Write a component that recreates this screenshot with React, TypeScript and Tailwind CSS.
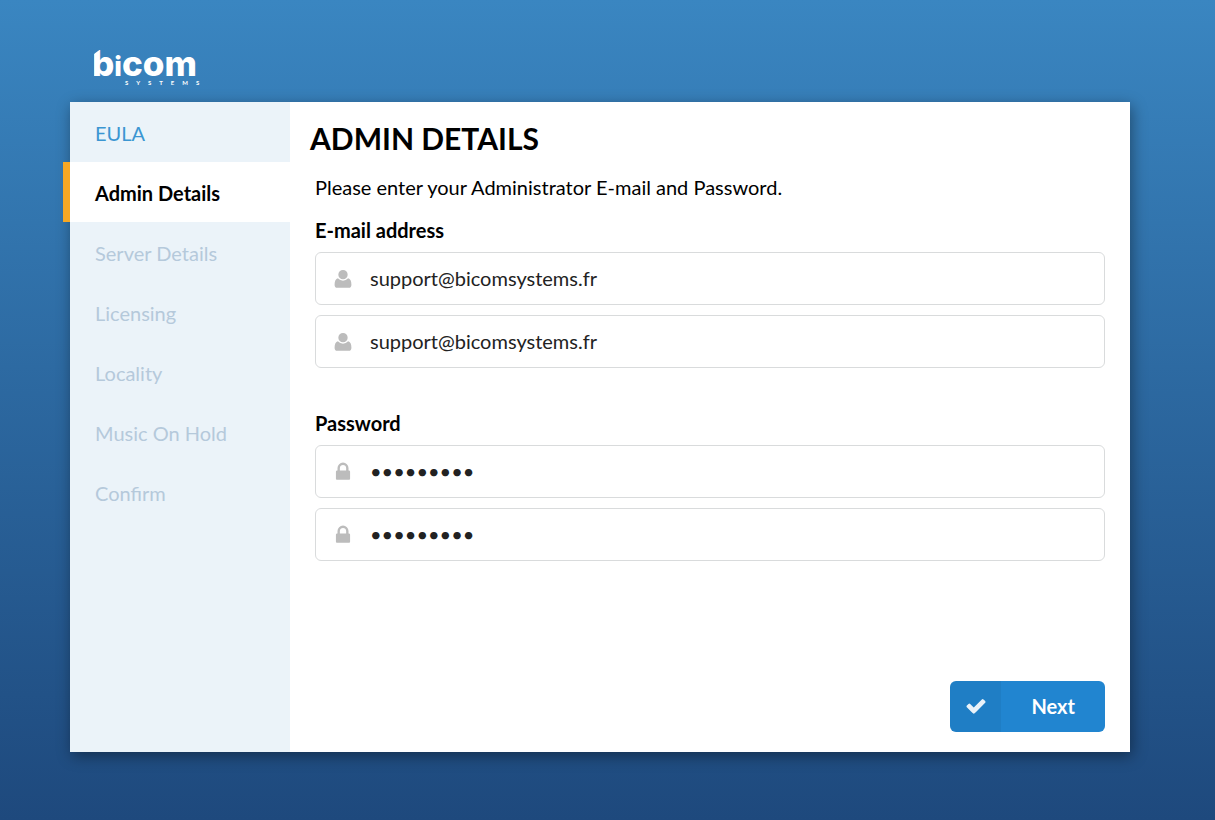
import { useState } from "react";

const steps = [
  "EULA",
  "Admin Details",
  "Server Details",
  "Licensing",
  "Locality",
  "Music On Hold",
  "Confirm",
];

const icons = {
  user: "M896 160a380 380 0 0 1 0 760a380 380 0 0 1 0-760zM480 830q170 200 416 200t416-200q270 60 270 530 0 250-210 250h-952q-210 0-210-250 0-470 270-530z",
  lock: "M640 768h512v-192q0-106-75-181t-181-75-181 75-75 181v192zm832 96v576q0 40-28 68t-68 28h-960q-40 0-68-28t-28-68v-576q0-40 28-68t68-28h32v-192q0-184 132-316t316-132 316 132 132 316v192h32q40 0 68 28t28 68z",
  check: "M1671 566q0 40-28 68l-724 724-136 136q-28 28-68 28t-68-28l-136-136-362-362q-28-28-28-68t28-68l136-136q28-28 68-28t68 28l294 295 656-657q28-28 68-28t68 28l136 136q28 28 28 68z",
};

function Icon({ name, className }: { name: keyof typeof icons; className: string }) {
  return (
    <svg viewBox="0 0 1792 1792" className={className} fill="currentColor" aria-hidden="true">
      <path d={icons[name]} />
    </svg>
  );
}

function Logo() {
  return (
    <svg viewBox="0 0 120 40" className="h-10 w-[120px]" fill="white" role="img" aria-label="bicom systems">
      {/* slanted cut on the stem of the b */}
      <clipPath id="stem">
        <path d="M-4 9L8 0V6H120V40H-4z" />
      </clipPath>
      <g clipPath="url(#stem)" className="font-['Inter',sans-serif] font-extrabold">
        <text x="-2" y="28" fontSize="35">
          b<tspan fontSize="27">i</tspan>com
        </text>
      </g>
      <text x="31" y="37" fontSize="6" letterSpacing="8" className="font-bold">SYSTEMS</text>
    </svg>
  );
}

type FieldProps = {
  id: string;
  type: string;
  icon: keyof typeof icons;
  label: string;
  value: string;
  onChange: (value: string) => void;
};

function Field({ id, type, icon, label, value, onChange }: FieldProps) {
  return (
    <div className="flex h-[53px] items-center rounded-md border border-[#d9dbdc] bg-white">
      <Icon name={icon} className="ml-4 size-[22px] shrink-0 text-[#bcbcbc]" />
      <input
        id={id}
        type={type}
        aria-label={label}
        value={value}
        onChange={(e) => onChange(e.target.value)}
        className="h-full min-w-0 flex-1 bg-transparent pb-0.5 pl-4 text-xl text-[#222] outline-none"
      />
    </div>
  );
}

export default function App() {
  const [email, setEmail] = useState("support@bicomsystems.fr");
  const [emailConfirm, setEmailConfirm] = useState("support@bicomsystems.fr");
  const [password, setPassword] = useState("bicom1234");
  const [passwordConfirm, setPasswordConfirm] = useState("bicom1234");
  const current = 1;

  return (
    <div className="min-h-screen bg-linear-to-b from-[#3a86c1] to-[#1e497d] pt-12 pr-[85px] pb-[68px] pl-[70px] font-['Lato',sans-serif]">
      <header className="mb-[14px] pl-6">
        <Logo />
      </header>

      <div className="flex min-h-[650px] bg-white shadow-[2px_4px_14px_rgba(0,0,0,0.4)]">
        {/* wizard steps */}
        <nav className="w-[220px] shrink-0 bg-[#ebf3f9] text-xl">
          {steps.map((step, i) => (
            <a
              key={step}
              href="#"
              className={
                i === current
                  ? "-ml-[7px] flex h-[60px] items-center border-l-7 border-[#f6a724] bg-white pt-0.5 pl-[25px] font-bold text-black"
                  : i < current
                    ? "flex h-[60px] items-center pt-0.5 pl-[25px] text-[#3b96d2]"
                    : "flex h-[60px] items-center pt-0.5 pl-[25px] text-[#b5c9db]"
              }
            >
              {step}
            </a>
          ))}
        </nav>

        <main className="flex min-w-0 flex-1 flex-col pt-[18px] pr-[25px] pb-5 pl-[25px]">
          <h1 className="-ml-[5px] text-[30px] leading-9 font-bold text-black">ADMIN DETAILS</h1>
          <p className="mt-[17px] text-xl text-black">
            Please enter your Administrator E-mail and Password.
          </p>

          <form className="flex flex-1 flex-col">
            <label htmlFor="email" className="mt-[15px] mb-2 text-xl font-bold text-black">
              E-mail address
            </label>
            <div className="flex flex-col gap-[10px]">
              <Field id="email" type="text" icon="user" label="E-mail address" value={email} onChange={setEmail} />
              <Field id="email2" type="text" icon="user" label="Repeat e-mail address" value={emailConfirm} onChange={setEmailConfirm} />
            </div>

            <label htmlFor="password" className="mt-[41px] mb-2 text-xl font-bold text-black">
              Password
            </label>
            <div className="flex flex-col gap-[10px]">
              <Field id="password" type="password" icon="lock" label="Password" value={password} onChange={setPassword} />
              <Field id="password2" type="password" icon="lock" label="Repeat password" value={passwordConfirm} onChange={setPasswordConfirm} />
            </div>

            <button
              type="button"
              className="mt-auto flex h-[51px] items-stretch self-end overflow-hidden rounded-md bg-[#2185d0] text-xl font-bold text-white"
            >
              <span className="flex w-[51px] items-center justify-center bg-black/5 pb-0.5">
                <Icon name="check" className="size-[22px] opacity-90" />
              </span>
              <span className="flex items-center px-[30px] pb-0.5">Next</span>
            </button>
          </form>
        </main>
      </div>
    </div>
  );
}
